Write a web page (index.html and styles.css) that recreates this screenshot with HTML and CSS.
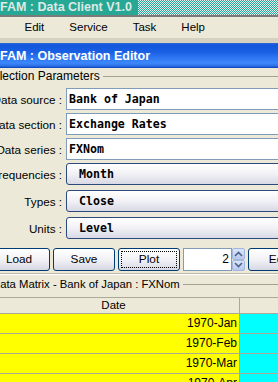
FILE: index.html
```html
<!DOCTYPE html>
<html lang="en">
<head>
    <meta charset="UTF-8">
    <title>FAM : Data Client V1.0</title>
    <link rel="stylesheet" href="styles.css">
</head>
<body>

    <div class="window">
        <div class="titlebar">
            <div class="title-text">FAM : Data Client V1.0</div>
            <div class="title-dither"></div>
        </div>

        <nav class="menubar">
            <span>Edit</span>
            <span>Service</span>
            <span>Task</span>
            <span>Help</span>
        </nav>
        <div class="menu-shade"></div>

        <div class="frame-title">FAM : Observation Editor</div>

        <div class="frame-body">
            <div class="group-title params-title"><span>Selection Parameters</span><i></i></div>

            <div class="form">
                <div class="row">
                    <label>Data source :</label>
                    <div class="field">Bank of Japan</div>
                </div>
                <div class="row">
                    <label>Data section :</label>
                    <div class="field">Exchange Rates</div>
                </div>
                <div class="row">
                    <label>Data series :</label>
                    <div class="field">FXNom</div>
                </div>
                <div class="row pick">
                    <label>Frequencies :</label>
                    <div class="combo">Month</div>
                </div>
                <div class="row pick">
                    <label>Types :</label>
                    <div class="combo">Close</div>
                </div>
                <div class="row pick">
                    <label>Units :</label>
                    <div class="combo">Level</div>
                </div>
            </div>

            <div class="buttons">
                <div class="btn">Load</div>
                <div class="btn">Save</div>
                <div class="btn focus">Plot</div>
                <div class="spinner">
                    <div class="spin-field">2</div>
                    <div class="spin-arrows">
                        <div class="arrow">
                            <svg width="9" height="6" viewBox="0 0 9 6"><polyline points="1,5 4.5,1.5 8,5" fill="none" stroke="#4d6185" stroke-width="1.6"/></svg>
                        </div>
                        <div class="arrow">
                            <svg width="9" height="6" viewBox="0 0 9 6"><polyline points="1,1 4.5,4.5 8,1" fill="none" stroke="#4d6185" stroke-width="1.6"/></svg>
                        </div>
                    </div>
                </div>
                <div class="btn">Edit</div>
            </div>

            <div class="divider"></div>

            <div class="group-title matrix-title"><span>Data Matrix - Bank of Japan : FXNom</span><i></i></div>

            <div class="matrix">
                <div class="matrix-head">
                    <div class="cell-date">Date</div>
                    <div class="cell-val"></div>
                </div>
                <div class="matrix-row">
                    <div class="cell-date">1970-Jan</div>
                    <div class="cell-val"></div>
                </div>
                <div class="matrix-row">
                    <div class="cell-date">1970-Feb</div>
                    <div class="cell-val"></div>
                </div>
                <div class="matrix-row">
                    <div class="cell-date">1970-Mar</div>
                    <div class="cell-val"></div>
                </div>
                <div class="matrix-row">
                    <div class="cell-date">1970-Apr</div>
                    <div class="cell-val"></div>
                </div>
            </div>
        </div>
    </div>

</body>
</html>
```

FILE: styles.css
```css
body {
    margin: 0;
    background: #ece9d8;
    overflow: hidden;
    font-family: "Liberation Sans", Arial, sans-serif;
    font-size: 11px;
    color: #000;
}

.window {
    margin-left: -12px;
    width: 360px;
}

/* application title bar */
.titlebar {
    display: flex;
    height: 15px;
    border-bottom: 2px solid #7b7b7b;
}

.title-text {
    width: 138px;
    padding-left: 12px;
    background: #27a894;
    color: #dfe9e6;
    font-weight: bold;
    font-size: 12.5px;
    line-height: 15px;
    white-space: nowrap;
}

.title-dither {
    flex: 1;
    background: repeating-conic-gradient(#27a894 0 25%, #e6f3f0 0 50%) 0 0 / 2px 2px;
}

/* menu */
.menubar {
    display: flex;
    height: 21px;
    padding-left: 24px;
    font-size: 11.5px;
    line-height: 21px;
}

.menubar span {
    padding: 0 12.5px;
}

.menu-shade {
    height: 5px;
    background: #d6d2c2;
}

/* internal frame */
.frame-title {
    height: 25px;
    line-height: 26px;
    padding-left: 12px;
    color: #fff;
    font-weight: bold;
    font-size: 12.5px;
    white-space: nowrap;
    background: linear-gradient(to bottom, #3168d5 0, #1157dc 8%, #1a5fe3 35%, #2a73f0 55%, #3d88fb 80%, #2b6fe6 92%, #0a3fb5 100%);
}

.frame-body {
    padding-top: 1px;
}

.group-title {
    display: flex;
    align-items: center;
    height: 14px;
    white-space: nowrap;
}

.group-title i {
    flex: 1;
    height: 1px;
    margin-left: 3px;
    background: #a5a291;
}

.params-title {
    margin-left: -3px;
    font-size: 12px;
}

.matrix-title {
    margin-top: 2px;
    padding-left: 4px;
    font-size: 11.3px;
}

/* parameter rows */
.form {
    margin-top: 5px;
}

.row {
    display: flex;
    align-items: center;
    height: 22px;
    margin-bottom: 3px;
}

.row.pick {
    margin-bottom: 5px;
}

.row label {
    width: 74px;
    flex: none;
    display: flex;
    justify-content: flex-end;
    padding-right: 4px;
    font-size: 11.7px;
    white-space: nowrap;
}

.field,
.combo {
    flex: none;
    width: 240px;
    height: 22px;
    box-sizing: border-box;
    font: bold 11.6px "DejaVu Sans Mono", monospace;
    line-height: 20px;
    white-space: nowrap;
}

.field {
    border: 1px solid #7f9db9;
    background: #fff;
    padding-left: 2px;
}

.combo {
    border: 1px solid #2c4a7c;
    border-radius: 3px;
    padding-left: 12px;
    background: linear-gradient(#fff, #f3f3f7 45%, #d9d9e6);
}

/* buttons */
.buttons {
    display: flex;
    gap: 3px;
    margin-top: 9px;
}

.btn {
    position: relative;
    flex: none;
    width: 62px;
    height: 23px;
    box-sizing: border-box;
    border: 1px solid #003c74;
    border-radius: 3px;
    background: linear-gradient(#fff, #f2f2f6 50%, #d8d8e4);
    text-align: center;
    line-height: 21px;
    font-size: 11.8px;
}

.btn.focus::after {
    content: "";
    position: absolute;
    top: 2px;
    left: 2px;
    right: 2px;
    bottom: 2px;
    border: 1px dotted #000;
}

.spinner {
    display: flex;
    flex: none;
    width: 62px;
    height: 23px;
}

.spin-field {
    flex: 1;
    border: 1px solid #7f9db9;
    background: #fff;
    text-align: right;
    padding-right: 2px;
    font-size: 12px;
    line-height: 21px;
}

.spin-arrows {
    width: 13px;
    display: flex;
    flex-direction: column;
}

.arrow {
    flex: 1;
    display: flex;
    align-items: center;
    justify-content: center;
    border: 1px solid #a3b6dc;
    border-radius: 2px;
    background: linear-gradient(#dbe5fb, #b7c8ef);
}

.divider {
    margin-top: 2px;
    height: 1px;
    background: #bdb9a8;
    border-bottom: 1px solid #fff;
}

/* data matrix */
.matrix {
    margin-top: 6px;
}

.matrix-head,
.matrix-row {
    display: flex;
    box-sizing: border-box;
    border-bottom: 1px solid #aca899;
}

.matrix-head {
    height: 17px;
    border-top: 1px solid #aca899;
    font-size: 11.5px;
    line-height: 15px;
}

.matrix-row {
    height: 20px;
    font-size: 12px;
    line-height: 19px;
}

.cell-date {
    flex: none;
    width: 252px;
    box-sizing: border-box;
    border-right: 1px solid #aca899;
    padding-right: 2px;
}

.cell-val {
    flex: 1;
}

.matrix-head .cell-date {
    text-align: center;
    padding-right: 0;
}

.matrix-row .cell-date {
    text-align: right;
    background: #ffff00;
}

.matrix-row .cell-val {
    background: #00ffff;
}
```
